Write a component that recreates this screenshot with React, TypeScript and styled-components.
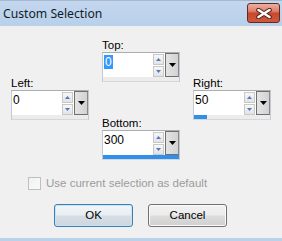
import styled, { createGlobalStyle } from 'styled-components';

interface IField {
  label: string;
  value: number;
  col: number;
  rows: string;
  selected?: boolean;
}

const MAX = 300;

const fields: IField[] = [
  { label: 'Top:', value: 0, col: 2, rows: '1 / 3', selected: true },
  { label: 'Left:', value: 0, col: 1, rows: '2 / 5' },
  { label: 'Right:', value: 50, col: 3, rows: '2 / 5' },
  { label: 'Bottom:', value: 300, col: 2, rows: '4 / 6' },
];

const GlobalStyle = createGlobalStyle`
  html, body {
    margin: 0;
    padding: 0;
    width: 282px;
    height: 241px;
    overflow: hidden;
    background: #f0f0f0;
  }
`;

const Window = styled.div`
  width: 282px;
  height: 241px;
  display: flex;
  flex-direction: column;
  font-family: 'Liberation Sans', Arial, sans-serif;
`;

const TitleBar = styled.div`
  height: 25px;
  border-top: 1px solid #a5b8cf;
  background: linear-gradient(#c3d7ee, #b9d0ea);
  display: flex;
  justify-content: space-between;
  align-items: flex-start;
  padding-left: 3px;
`;

const Title = styled.div`
  font-family: 'Noto Sans', sans-serif;
  font-size: 12.2px;
  line-height: 25px;
  color: #111d2c;
`;

const CloseButton = styled.div`
  width: 31px;
  height: 18px;
  margin: 2px 2px 0 0;
  border: 1px solid #5e2a22;
  border-radius: 3px;
  background: linear-gradient(#eab0a3 0%, #dc7f6b 40%, #c9472e 52%, #cf5a3e 100%);
  display: flex;
  align-items: center;
  justify-content: center;
`;

const Body = styled.div`
  flex: 1;
  background: #f0f0f0;
  border-bottom: 3px solid #b9d1ea;
  display: flex;
  flex-direction: column;
`;

const FieldGrid = styled.div`
  display: grid;
  grid-template-columns: 78px 78px 78px;
  grid-template-rows: 38px 6px 34px 4px 40px;
  column-gap: 13px;
  padding: 12px 0 0 11px;
  height: 122px;
`;

const Group = styled.div<{ $col: number; $rows: string }>`
  grid-column: ${p => p.$col};
  grid-row: ${p => p.$rows};
  display: flex;
  flex-direction: column;
`;

const Label = styled.div`
  font-size: 11.5px;
  line-height: 14px;
  height: 14px;
  color: #000;
`;

const Box = styled.div`
  width: 76px;
  height: 28px;
  border: 1px solid #abadb3;
  border-left-color: #c4c8d0;
  border-right-color: #c4c8d0;
  border-bottom-color: #d4d8de;
  background: #fff;
  display: flex;
  flex-direction: column;
`;

const InputRow = styled.div`
  height: 24px;
  display: flex;
`;

const Value = styled.div`
  flex: 1;
  font-size: 12px;
  line-height: 19px;
  padding-left: 1px;
  color: #000;
`;

const Selected = styled.span`
  display: inline-block;
  background: #3399ff;
  color: #fff;
  line-height: 14px;
  margin-top: 2px;
  padding: 0 1px;
`;

const Spinner = styled.div`
  width: 11px;
  display: flex;
  flex-direction: column;
  gap: 1px;
  padding-top: 1px;
  margin-right: 1px;
`;

const SpinButton = styled.div`
  height: 9px;
  border: 1px solid #c8c8c8;
  background: linear-gradient(#f7f7f7, #e3e3e3);
  display: flex;
  align-items: center;
  justify-content: center;
`;

const DropButton = styled.div`
  width: 12px;
  height: 22px;
  border: 1px solid #6f6f6f;
  border-right-color: #8a8a8a;
  background: linear-gradient(90deg, #e4e4e4, #d2d2d2);
  display: flex;
  align-items: center;
  justify-content: center;
`;

const Strip = styled.div`
  height: 4px;
  background: #ececec;
  display: flex;
`;

const Progress = styled.div`
  height: 100%;
  background: #2f8fe9;
`;

const CheckRow = styled.div`
  margin-top: 17px;
  padding-left: 28px;
  height: 13px;
  display: flex;
  align-items: center;
  gap: 5px;
`;

const CheckBox = styled.div`
  width: 11px;
  height: 11px;
  border: 1px solid #bfbfbf;
  background: linear-gradient(135deg, #f1f1f1, #fafafa);
`;

const CheckText = styled.div`
  font-size: 11.5px;
  line-height: 13px;
  color: #9c9c9c;
`;

const ButtonRow = styled.div`
  margin-top: 14px;
  padding-left: 54px;
  display: flex;
  gap: 15px;
`;

const Button = styled.div<{ $default?: boolean }>`
  width: 77px;
  height: 21px;
  border: 1px solid ${p => (p.$default ? '#3c7fb1' : '#707070')};
  border-radius: 3px;
  background: ${p =>
    p.$default
      ? 'linear-gradient(#f2f6f9 0%, #e7edf2 48%, #d6dfe6 52%, #cdd6de 100%)'
      : 'linear-gradient(#f2f2f2 0%, #ebebeb 48%, #dddddd 52%, #cfcfcf 100%)'};
  box-shadow: inset 0 0 0 1px ${p => (p.$default ? '#c9e3f5' : '#fbfbfb')};
  font-size: 11.5px;
  line-height: 21px;
  text-align: center;
  color: #000;
`;

const Field = ({ label, value, col, rows, selected }: IField) => (
  <Group $col={col} $rows={rows}>
    <Label>{label}</Label>
    <Box>
      <InputRow>
        <Value>{selected ? <Selected>{value}</Selected> : value}</Value>
        <Spinner>
          <SpinButton>
            <svg width="5" height="3" viewBox="0 0 5 3">
              <path d="M0 3 L2.5 0 L5 3 Z" fill="#5676bd" />
            </svg>
          </SpinButton>
          <SpinButton>
            <svg width="5" height="3" viewBox="0 0 5 3">
              <path d="M0 0 L2.5 3 L5 0 Z" fill="#5676bd" />
            </svg>
          </SpinButton>
        </Spinner>
        <DropButton>
          <svg width="7" height="4" viewBox="0 0 7 4">
            <path d="M0 0 L7 0 L3.5 4 Z" fill="#000" />
          </svg>
        </DropButton>
      </InputRow>
      <Strip>
        <Progress style={{ width: `${(value / MAX) * 100}%` }} />
      </Strip>
    </Box>
  </Group>
);

const App = () => {
  return (
    <Window>
      <GlobalStyle />
      <TitleBar>
        <Title>Custom Selection</Title>
        <CloseButton>
          <svg width="16" height="11" viewBox="0 0 16 11">
            <path d="M2.5 2 L13.5 9 M13.5 2 L2.5 9" stroke="#4a1c14" strokeWidth="4.4" strokeLinecap="round" />
            <path d="M2.5 2 L13.5 9 M13.5 2 L2.5 9" stroke="#fff" strokeWidth="2.6" strokeLinecap="round" />
          </svg>
        </CloseButton>
      </TitleBar>
      <Body>
        <FieldGrid>
          {fields.map(f => (
            <Field key={f.label} {...f} />
          ))}
        </FieldGrid>
        <CheckRow>
          <CheckBox />
          <CheckText>Use current selection as default</CheckText>
        </CheckRow>
        <ButtonRow>
          <Button $default>OK</Button>
          <Button>Cancel</Button>
        </ButtonRow>
      </Body>
    </Window>
  );
};

export default App;
